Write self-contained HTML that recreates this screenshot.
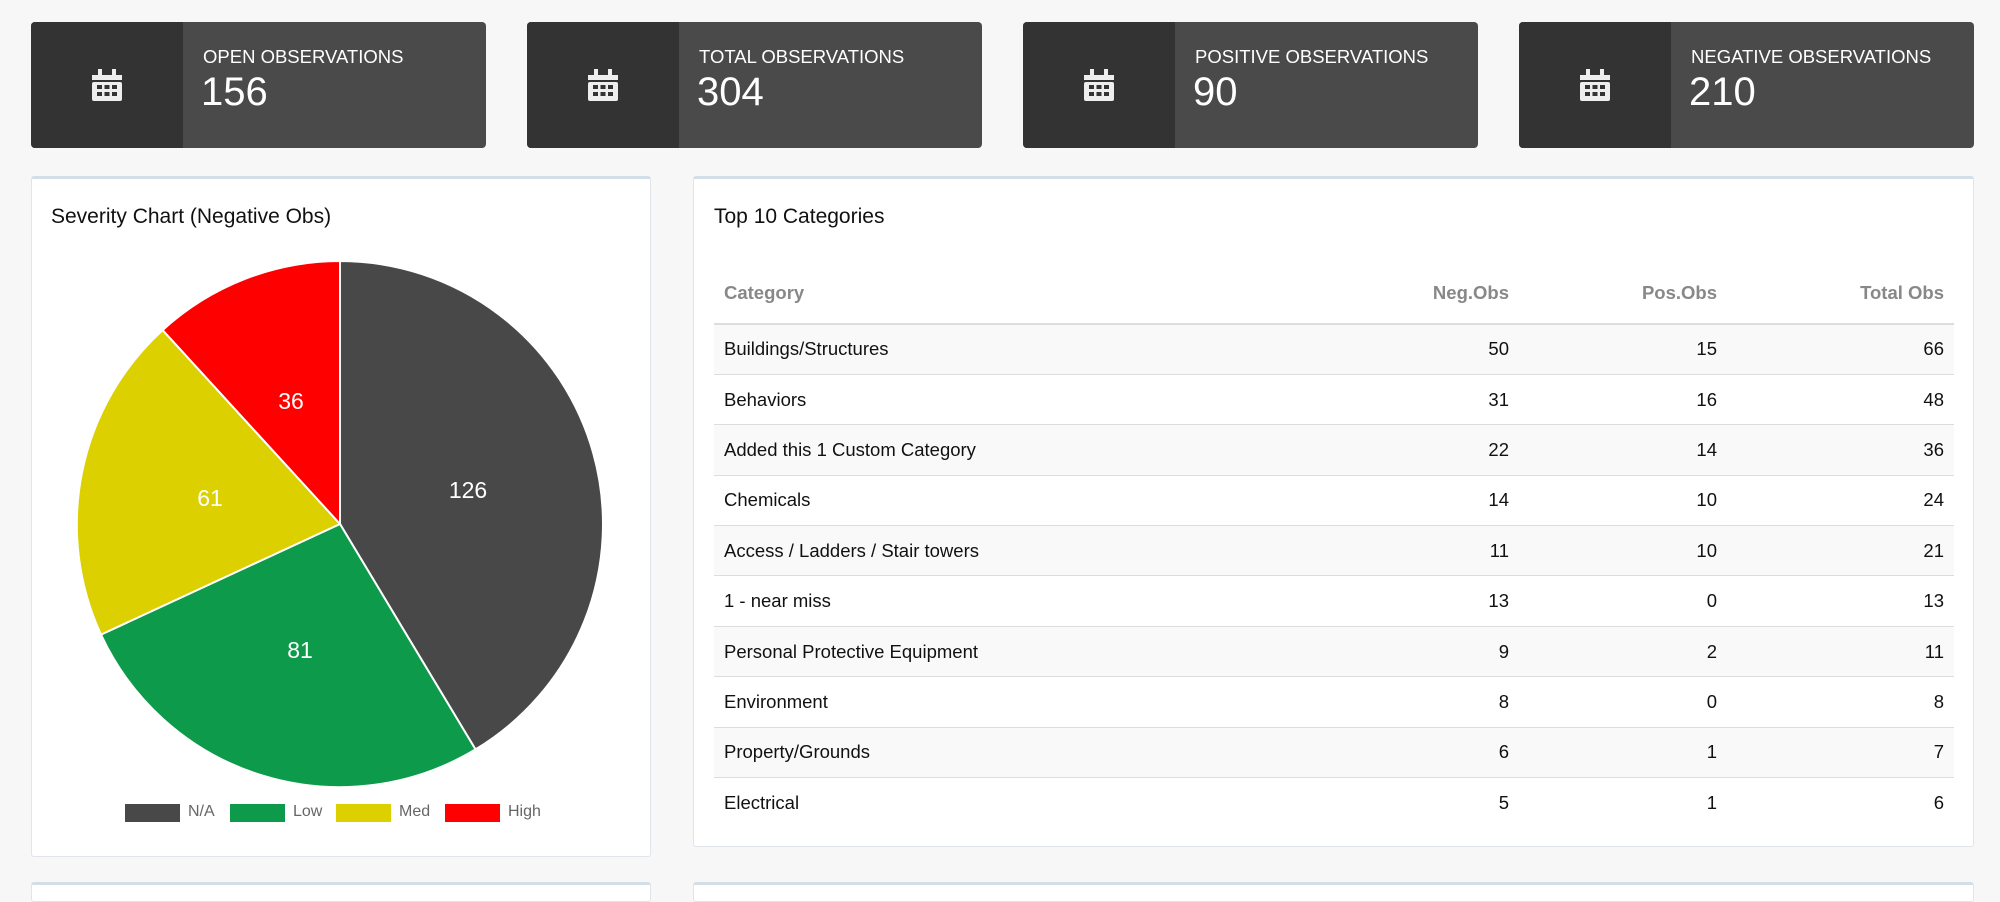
<!DOCTYPE html>
<html><head><meta charset="utf-8"><style>
*{box-sizing:border-box;margin:0;padding:0}
body{width:2000px;height:885px;background:#f7f7f7;font-family:"Liberation Sans",Arial,sans-serif;position:relative;overflow:hidden}
.card{position:absolute;top:22px;width:455px;height:126px;background:#4a4a4a;border-radius:4px;overflow:hidden}
.card .ic{position:absolute;left:0;top:0;width:152px;height:126px;background:#333;display:flex;align-items:center;justify-content:center}
.card .lb{position:absolute;left:172px;top:24px;color:#fff;font-size:18.5px}
.card .nm{position:absolute;left:170px;top:48px;color:#fff;font-size:40px}
.panel{position:absolute;background:#fff;border:1px solid #dfe5ea;border-top:3px solid #d2dfe8;border-radius:3px}
.title{position:absolute;font-size:21px;color:#111}
table{position:absolute;left:714px;top:268px;width:1240px;border-collapse:collapse;font-size:18.5px;color:#111}
th{color:#888;font-weight:bold;text-align:right;height:56px;padding:0 10px;border-bottom:2px solid #ddd;vertical-align:middle;padding-bottom:6px}
td{text-align:right;height:50.4px;padding:0 10px;border-top:1px solid #ddd}
th:first-child,td:first-child{text-align:left}
tbody tr:nth-child(odd){background:#f9f9f9}
.leg{position:absolute;top:804px;height:18px}
.lt{position:absolute;top:803px;font-size:16px;color:#666}
</style></head><body>
<div class="card" style="left:31px"><div class="ic"><svg width="30" height="32" viewBox="0 0 30 32"><rect x="6" y="0" width="4" height="6" fill="#eee"/><rect x="20" y="0" width="4" height="6" fill="#eee"/><path d="M0 6h30v5H0z" fill="#eee"/><rect x="0" y="13" width="30" height="19" rx="2" fill="#eee"/><g fill="#333"><rect x="5" y="16" width="5" height="4"/><rect x="12.5" y="16" width="5" height="4"/><rect x="20" y="16" width="5" height="4"/><rect x="5" y="23" width="5" height="4"/><rect x="12.5" y="23" width="5" height="4"/><rect x="20" y="23" width="5" height="4"/></g></svg></div><div class="lb">OPEN OBSERVATIONS</div><div class="nm">156</div></div>
<div class="card" style="left:527px"><div class="ic"><svg width="30" height="32" viewBox="0 0 30 32"><rect x="6" y="0" width="4" height="6" fill="#eee"/><rect x="20" y="0" width="4" height="6" fill="#eee"/><path d="M0 6h30v5H0z" fill="#eee"/><rect x="0" y="13" width="30" height="19" rx="2" fill="#eee"/><g fill="#333"><rect x="5" y="16" width="5" height="4"/><rect x="12.5" y="16" width="5" height="4"/><rect x="20" y="16" width="5" height="4"/><rect x="5" y="23" width="5" height="4"/><rect x="12.5" y="23" width="5" height="4"/><rect x="20" y="23" width="5" height="4"/></g></svg></div><div class="lb">TOTAL OBSERVATIONS</div><div class="nm">304</div></div>
<div class="card" style="left:1023px"><div class="ic"><svg width="30" height="32" viewBox="0 0 30 32"><rect x="6" y="0" width="4" height="6" fill="#eee"/><rect x="20" y="0" width="4" height="6" fill="#eee"/><path d="M0 6h30v5H0z" fill="#eee"/><rect x="0" y="13" width="30" height="19" rx="2" fill="#eee"/><g fill="#333"><rect x="5" y="16" width="5" height="4"/><rect x="12.5" y="16" width="5" height="4"/><rect x="20" y="16" width="5" height="4"/><rect x="5" y="23" width="5" height="4"/><rect x="12.5" y="23" width="5" height="4"/><rect x="20" y="23" width="5" height="4"/></g></svg></div><div class="lb">POSITIVE OBSERVATIONS</div><div class="nm">90</div></div>
<div class="card" style="left:1519px"><div class="ic"><svg width="30" height="32" viewBox="0 0 30 32"><rect x="6" y="0" width="4" height="6" fill="#eee"/><rect x="20" y="0" width="4" height="6" fill="#eee"/><path d="M0 6h30v5H0z" fill="#eee"/><rect x="0" y="13" width="30" height="19" rx="2" fill="#eee"/><g fill="#333"><rect x="5" y="16" width="5" height="4"/><rect x="12.5" y="16" width="5" height="4"/><rect x="20" y="16" width="5" height="4"/><rect x="5" y="23" width="5" height="4"/><rect x="12.5" y="23" width="5" height="4"/><rect x="20" y="23" width="5" height="4"/></g></svg></div><div class="lb">NEGATIVE OBSERVATIONS</div><div class="nm">210</div></div>

<div class="panel" style="left:31px;top:176px;width:620px;height:681px"></div>
<div class="panel" style="left:693px;top:176px;width:1281px;height:671px"></div>
<div class="panel" style="left:31px;top:882px;width:620px;height:20px"></div>
<div class="panel" style="left:693px;top:882px;width:1281px;height:20px"></div>

<div class="title" style="left:51px;top:205px">Severity Chart (Negative Obs)</div>
<svg style="position:absolute;left:0;top:0" width="700" height="885">
<g stroke="#fff" stroke-width="2">
<path d="M340 524 L340 261 A263 263 0 0 1 475.5 749.4 Z" fill="#484848"/>
<path d="M340 524 L475.5 749.4 A263 263 0 0 1 101 634.6 Z" fill="#0d9a4a"/>
<path d="M340 524 L101 634.6 A263 263 0 0 1 162.6 330.1 Z" fill="#dcd000"/>
<path d="M340 524 L162.6 330.1 A263 263 0 0 1 340 261 Z" fill="#ff0000"/>
</g>
<g fill="#fff" font-family="Liberation Sans,Arial,sans-serif" font-size="23" text-anchor="middle">
<text x="468" y="498">126</text><text x="300" y="658">81</text><text x="210" y="506">61</text><text x="291" y="409">36</text>
</g>
</svg>
<div class="leg" style="left:125px;width:55px;background:#484848"></div><div class="lt" style="left:188px">N/A</div>
<div class="leg" style="left:230px;width:55px;background:#0d9a4a"></div><div class="lt" style="left:293px">Low</div>
<div class="leg" style="left:336px;width:55px;background:#dcd000"></div><div class="lt" style="left:399px">Med</div>
<div class="leg" style="left:445px;width:55px;background:#ff0000"></div><div class="lt" style="left:508px">High</div>

<div class="title" style="left:714px;top:205px">Top 10 Categories</div>
<table>
<thead><tr><th>Category</th><th>Neg.Obs</th><th style="width:208px">Pos.Obs</th><th style="width:227px">Total Obs</th></tr></thead>
<tbody>
<tr><td>Buildings/Structures</td><td>50</td><td>15</td><td>66</td></tr>
<tr><td>Behaviors</td><td>31</td><td>16</td><td>48</td></tr>
<tr><td>Added this 1 Custom Category</td><td>22</td><td>14</td><td>36</td></tr>
<tr><td>Chemicals</td><td>14</td><td>10</td><td>24</td></tr>
<tr><td>Access / Ladders / Stair towers</td><td>11</td><td>10</td><td>21</td></tr>
<tr><td>1 - near miss</td><td>13</td><td>0</td><td>13</td></tr>
<tr><td>Personal Protective Equipment</td><td>9</td><td>2</td><td>11</td></tr>
<tr><td>Environment</td><td>8</td><td>0</td><td>8</td></tr>
<tr><td>Property/Grounds</td><td>6</td><td>1</td><td>7</td></tr>
<tr><td>Electrical</td><td>5</td><td>1</td><td>6</td></tr>
</tbody></table>
</body></html>
